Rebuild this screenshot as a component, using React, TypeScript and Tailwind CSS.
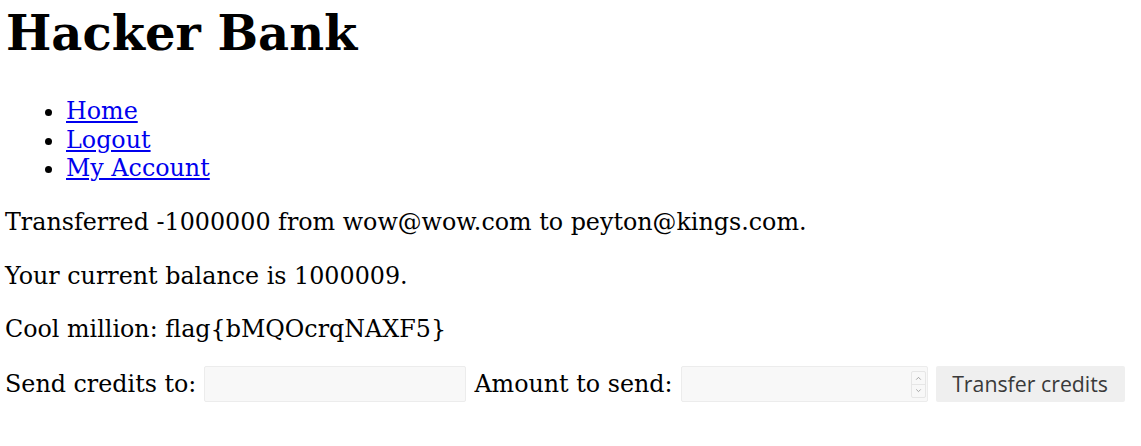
export default function App() {
  return (
    <div className="px-[5px] font-['DejaVu_Serif',serif] text-[23.8px] text-black bg-white min-h-[446px]">
      <h1 className="pt-[5px] pl-[1px] text-[48px] font-bold leading-[56px]">Hacker Bank</h1>

      <ul className="mt-[36px] list-disc pl-[61px] leading-[28.5px]">
        <li>
          <a href="#" className="text-[#0000ee] underline">Home</a>
        </li>
        <li>
          <a href="#" className="text-[#0000ee] underline">Logout</a>
        </li>
        <li>
          <a href="#" className="text-[#0000ee] underline">My Account</a>
        </li>
      </ul>

      <p className="mt-[25.5px] leading-[28px]">Transferred -1000000 from wow@wow.com to peyton@kings.com.</p>
      <p className="mt-[25.5px] leading-[28px]">Your current balance is 1000009.</p>
      <p className="mt-[25px] leading-[28px]">Cool million: flag{"{"}bMQOcrqNAXF5{"}"}</p>

      <form className="mt-[23px] flex items-center h-[36px] leading-[28px]" onSubmit={(e) => e.preventDefault()}>
        <label className="mr-[8px]">Send credits to:</label>
        <input
          type="text"
          className="h-[36px] w-[262px] rounded-[2px] border border-[#ececec] bg-[#f8f8f8] outline-none"
        />
        <label className="ml-[8px] mr-[8px]">Amount to send:</label>
        <div className="relative h-[36px] w-[247px] rounded-[2px] border border-[#ececec] bg-[#f8f8f8]">
          <div className="absolute right-[1px] top-[4px] flex h-[27px] w-[15px] flex-col rounded-[2px] border border-[#e6e6e6]">
            <svg viewBox="0 0 14 13" className="h-1/2 w-full" fill="none" stroke="#9a9a9a" strokeWidth="1">
              <path d="M4.5 8 L7 5.5 L9.5 8" />
            </svg>
            <svg viewBox="0 0 14 13" className="h-1/2 w-full border-t border-[#e6e6e6]" fill="none" stroke="#9a9a9a" strokeWidth="1">
              <path d="M4.5 5 L7 7.5 L9.5 5" />
            </svg>
          </div>
        </div>
        <button
          type="submit"
          className="ml-[8px] h-[36px] w-[189px] rounded-[2px] bg-[#efefef] font-['Open_Sans',sans-serif] text-[21.3px] text-[#3a3a3a]"
        >
          Transfer credits
        </button>
      </form>
    </div>
  );
}
